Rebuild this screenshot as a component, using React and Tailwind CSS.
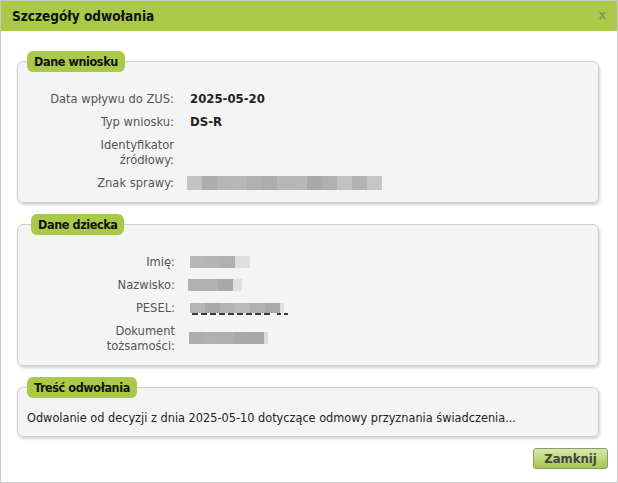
const Redact = ({ parts, h = 14 }) => (
  <div className="flex" style={{ height: h }}>
    {parts.map(([w, c], i) => (
      <div key={i} style={{ width: w, backgroundColor: c }} />
    ))}
  </div>
);

const Row = ({ label, children }) => (
  <>
    <div className="text-right text-[#555] py-[4px] leading-[15px]">{label}</div>
    <div className="py-[4px] leading-[15px] flex items-center">{children}</div>
  </>
);

const Section = ({ title, legendMl, className, children }) => (
  <fieldset
    className={`border border-[#cfcfcf] rounded-[6px] bg-[#f4f4f4] shadow-[1px_2px_3px_rgba(0,0,0,0.18)] ${className}`}
  >
    <legend
      className={`bg-[#abc948] rounded-[6px] px-[7px] h-[21px] leading-[21px] font-bold text-[12.5px] tracking-[-0.4px] text-[#111] ${legendMl}`}
    >
      {title}
    </legend>
    {children}
  </fieldset>
);

export default function App() {
  return (
    <div className="w-[618px] h-[483px] bg-white border border-[#c9c9c9] flex flex-col font-['DejaVu_Sans_Condensed','DejaVu_Sans',sans-serif] text-[12.8px]">
      <div className="h-[30px] bg-[#abc948] flex items-center justify-between pl-[11px] pr-[11px]">
        <span className="font-bold text-[13.5px] text-[#111]">Szczegóły odwołania</span>
        <span className="text-[13px] font-bold text-[#7d9c60] leading-none -mt-[4px]">x</span>
      </div>

      <div className="flex flex-col ml-[16px] mr-[18px]">
        <Section title="Dane wniosku" legendMl="ml-[9px]" className="mt-[20px]">
          <div className="grid grid-cols-[156px_1fr] gap-x-[16px] pt-[15px] pb-[8px]">
            <Row label="Data wpływu do ZUS:">
              <span className="font-bold text-[13px] text-[#222]">2025-05-20</span>
            </Row>
            <Row label="Typ wniosku:">
              <span className="font-bold text-[13px] text-[#222]">DS-R</span>
            </Row>
            <Row label={<>Identyfikator<br />źródłowy:</>}>{null}</Row>
            <Row label="Znak sprawy:">
              <div className="-ml-[3px]">
                <Redact
                  parts={[
                    [15, "#c3c3c3"], [15, "#acadac"], [15, "#b4b5b4"], [15, "#b7b8b7"],
                    [15, "#afb0af"], [15, "#adadad"], [15, "#b7b7b7"], [15, "#b8b8b8"],
                    [15, "#a9a9a9"], [15, "#b0b0b0"], [15, "#c2c2c2"], [15, "#b3b3b3"],
                    [15, "#c5c6c5"],
                  ]}
                />
              </div>
            </Row>
          </div>
        </Section>

        <Section title="Dane dziecka" legendMl="ml-[13px]" className="mt-[11px]">
          <div className="grid grid-cols-[157px_1fr] gap-x-[15px] pt-[15px] pb-[8px]">
            <Row label="Imię:">
              <Redact h={12} parts={[[15, "#b6b6b6"], [15, "#b4b4b4"], [15, "#b0b0b0"], [15, "#dedede"]]} />
            </Row>
            <Row label="Nazwisko:">
              <div className="-ml-[2px]">
                <Redact h={12} parts={[[15, "#b2b2b2"], [15, "#b3b3b3"], [15, "#a9a9a9"], [9, "#dfdfdf"]]} />
              </div>
            </Row>
            <Row label="PESEL:">
              <div className="flex flex-col pt-[3px]">
                <Redact
                  h={10}
                  parts={[
                    [15, "#b5b5b5"], [15, "#a8a8a8"], [15, "#b4b4b4"], [15, "#bbbbbb"],
                    [15, "#b0b0b0"], [15, "#aaaaaa"], [4, "#e0e0e0"],
                  ]}
                />
                <div className="flex gap-[3px] pl-[2px]">
                  {[6, 6, 6, 6, 6, 6, 6, 6, 6, 4, 4].map((w, i) => (
                    <div key={i} className="h-[2px] bg-[#3a3a3a]" style={{ width: w, marginLeft: i === 9 ? 4 : 0 }} />
                  ))}
                </div>
              </div>
            </Row>
            <Row label={<>Dokument<br />tożsamości:</>}>
              <div className="-ml-[1px]">
                <Redact
                  h={12}
                  parts={[[15, "#adadad"], [15, "#b0b0b0"], [15, "#afafaf"], [15, "#a9a9a9"], [15, "#a8a8a8"], [4, "#dcdcdc"]]}
                />
              </div>
            </Row>
          </div>
        </Section>

        <Section title="Treść odwołania" legendMl="ml-[9px]" className="mt-[11px]">
          <div className="px-[9px] pt-[12px] pb-[11px] leading-[15px] text-[#222] text-[12.6px]">
            Odwolanie od decyzji z dnia 2025-05-10 dotyczące odmowy przyznania świadczenia...
          </div>
        </Section>

        <div className="flex justify-end mt-[11px] -mr-[9px]">
          <button className="h-[21px] w-[75px] rounded-[3px] border border-[#8c9a72] bg-gradient-to-b from-[#dbe8a8] to-[#a6c64a] font-bold text-[13px] text-[#444] leading-none">
            Zamknij
          </button>
        </div>
      </div>
    </div>
  );
}
